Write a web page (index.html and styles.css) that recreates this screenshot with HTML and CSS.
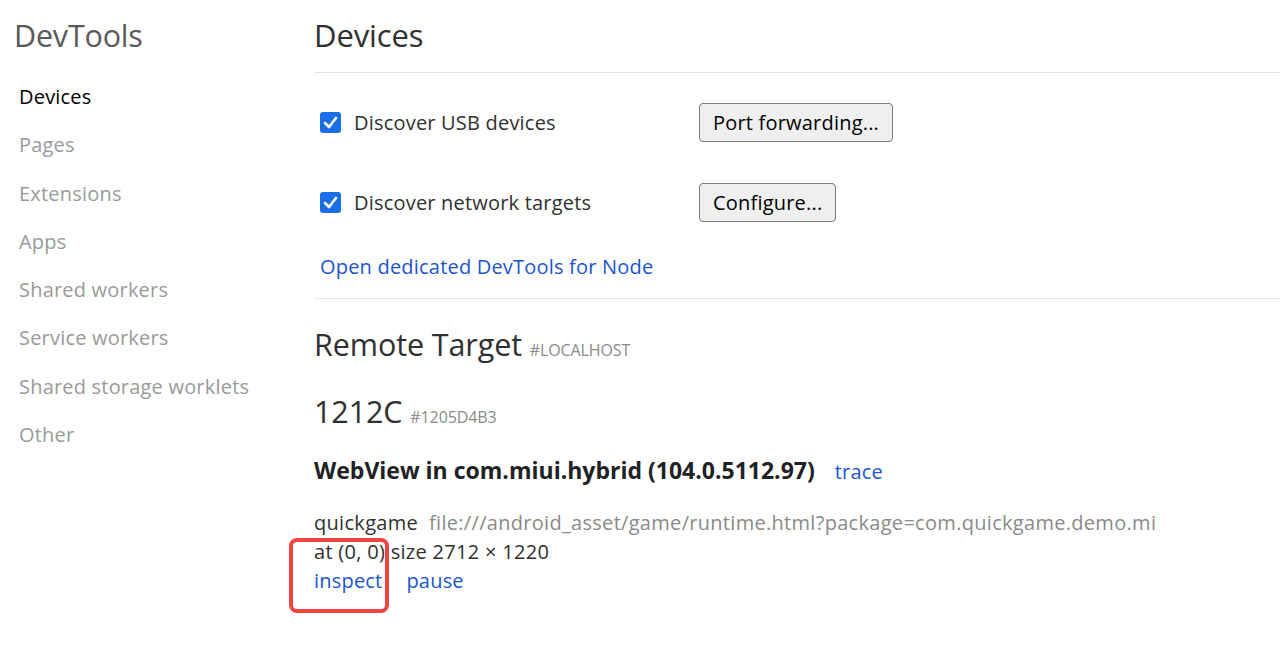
FILE: index.html
```html
<!DOCTYPE html>
<html lang="en">
<head>
<meta charset="utf-8">
<title>Inspect with Chrome Developer Tools</title>
<link rel="stylesheet" href="styles.css">
</head>
<body>
<div class="page">
  <nav class="sidebar">
    <h1 class="brand">DevTools</h1>
    <ul class="nav">
      <li class="nav-item active">Devices</li>
      <li class="nav-item">Pages</li>
      <li class="nav-item">Extensions</li>
      <li class="nav-item">Apps</li>
      <li class="nav-item">Shared workers</li>
      <li class="nav-item">Service workers</li>
      <li class="nav-item">Shared storage worklets</li>
      <li class="nav-item">Other</li>
    </ul>
  </nav>
  <main class="content">
    <header class="content-header">
      <h2 class="title">Devices</h2>
    </header>
    <section class="options">
      <div class="option-row">
        <label class="check">
          <span class="box"><svg viewBox="0 0 21 21" width="21" height="21"><path d="M5 11 L9 15 L16 6" fill="none" stroke="#fff" stroke-width="2.6" stroke-linecap="round" stroke-linejoin="round"/></svg></span>
          <span class="check-label">Discover USB devices</span>
        </label>
        <button class="btn">Port forwarding...</button>
      </div>
      <div class="option-row">
        <label class="check">
          <span class="box"><svg viewBox="0 0 21 21" width="21" height="21"><path d="M5 11 L9 15 L16 6" fill="none" stroke="#fff" stroke-width="2.6" stroke-linecap="round" stroke-linejoin="round"/></svg></span>
          <span class="check-label">Discover network targets</span>
        </label>
        <button class="btn">Configure...</button>
      </div>
      <a class="link node-link" href="#">Open dedicated DevTools for Node</a>
    </section>
    <section class="remote">
      <h3 class="remote-title">Remote Target <span class="tag">#LOCALHOST</span></h3>
      <h3 class="device-title">1212C <span class="tag">#1205D4B3</span></h3>
      <div class="browser">
        <span class="browser-name">WebView in com.miui.hybrid (104.0.5112.97)</span>
        <a class="link" href="#">trace</a>
      </div>
      <div class="target">
        <div class="target-line"><span class="target-name">quickgame</span><span class="target-url">file:///android_asset/game/runtime.html?package=com.quickgame.demo.mi</span></div>
        <div class="target-line">at (0, 0) size 2712 × 1220</div>
        <div class="actions">
          <span class="highlight"><a class="link" href="#">inspect</a></span>
          <a class="link" href="#">pause</a>
        </div>
      </div>
    </section>
  </main>
</div>
</body>
</html>
```

FILE: styles.css
```css
*, *::before, *::after { box-sizing: border-box; }
html, body { margin: 0; padding: 0; background: #fff; }
body {
  font-family: "Open Sans", "Noto Sans", "Liberation Sans", sans-serif;
  color: #303030;
  width: 1280px;
  height: 667px;
  overflow: hidden;
}
.page { display: flex; }
.sidebar { width: 314px; flex: none; padding-left: 14px; }
.brand {
  margin: 0;
  height: 72px;
  line-height: 70px;
  font-size: 30.5px;
  font-weight: 400;
  color: #5a5a5a;
  letter-spacing: -0.2px;
}
.nav { list-style: none; margin: 0; padding: 1px 0 0 5px; }
.nav-item {
  height: 48.3px;
  line-height: 48.3px;
  font-size: 20px;
  color: #9a9a9a;
  letter-spacing: 0.2px;
}
.nav-item.active { color: #000; }
.content { flex: 1; }
.content-header { height: 73px; border-bottom: 1px solid #e4e4e4; }
.title {
  margin: 0;
  line-height: 70px;
  font-size: 31px;
  font-weight: 400;
  color: #303030;
  letter-spacing: -0.1px;
}
.options {
  padding: 29px 0 16px 6px;
  border-bottom: 1px solid #e4e4e4;
  display: flex;
  flex-direction: column;
  gap: 40px;
}
.option-row { display: flex; align-items: center; height: 40px; }
.check { display: flex; align-items: center; width: 379px; }
.box {
  width: 21px; height: 21px;
  background: #1a6fe6;
  border-radius: 3px;
  display: inline-flex;
  margin-right: 13px;
}
.check-label { font-size: 20px; color: #303030; letter-spacing: 0.2px; }
.btn {
  font-family: inherit;
  font-size: 20px;
  color: #000;
  background: #efefef;
  border: 1px solid #7a7a7a;
  border-radius: 4px;
  height: 39px;
  padding: 0 13px;
  letter-spacing: 0.2px;
}
.link { color: #1a55d0; text-decoration: none; font-size: 20px; letter-spacing: 0.2px; }
.node-link { margin-top: -10px; line-height: 30px; display: inline-block; align-self: flex-start; }
.remote { padding-top: 23px; }
.remote-title, .device-title {
  margin: 0;
  font-size: 30.5px;
  font-weight: 400;
  color: #303030;
  letter-spacing: -0.1px;
  line-height: 44px;
}
.device-title { margin-top: 17px; }
.tag { font-size: 16px; color: #8a8a8a; margin-left: 0; letter-spacing: -0.1px; }
.browser { margin-top: 15px; line-height: 32px; display: flex; align-items: baseline; gap: 20px; }
.browser-name { font-size: 23px; font-weight: 700; color: #202124; letter-spacing: 0; }
.target { margin-top: 20px; font-size: 20px; letter-spacing: 0.3px; color: #303030; }
.target-line { line-height: 29px; }
.target-name { margin-right: 11px; }
.target-url { color: #8a8a8a; }
.actions { line-height: 29px; display: flex; gap: 24px; }
.highlight { position: relative; }
.highlight::before {
  content: "";
  position: absolute;
  left: -25px; top: -28px;
  width: 100px; height: 75px;
  border: 4px solid #ef4444;
  border-radius: 8px;
}
```
